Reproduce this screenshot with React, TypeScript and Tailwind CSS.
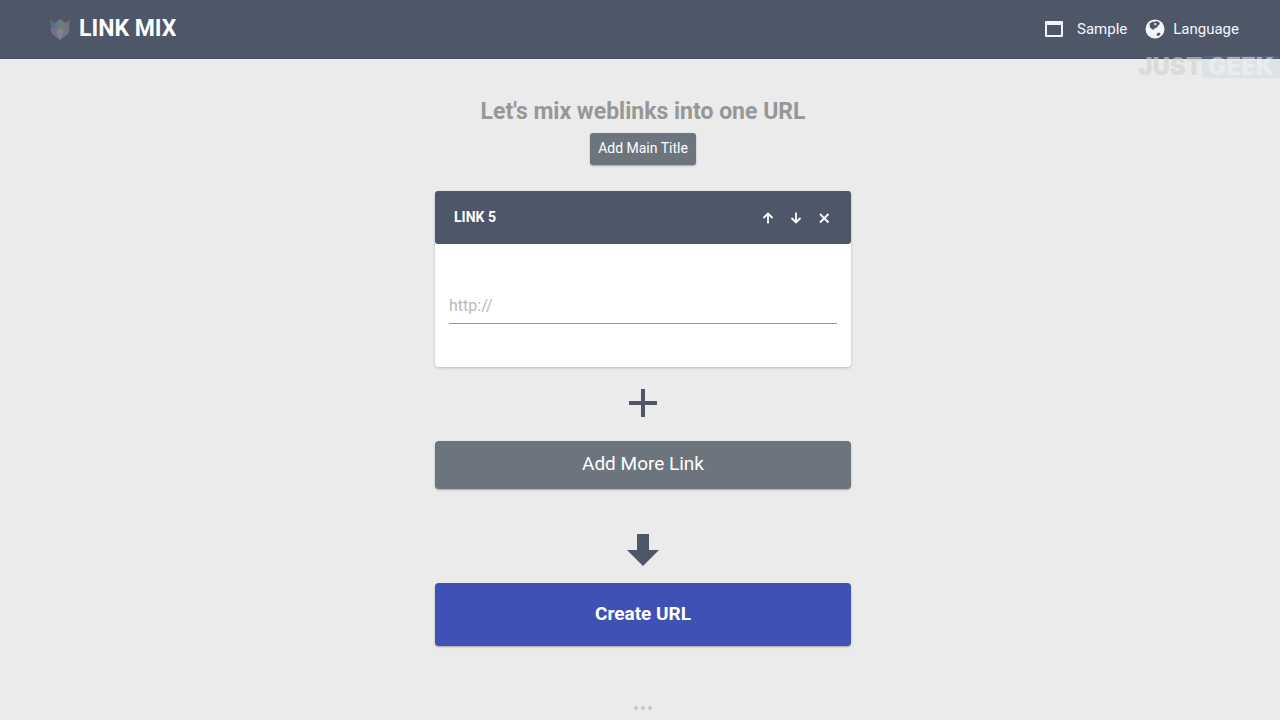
import { useState } from "react";

const CARD_ACTIONS = [
  { label: "Move link up", path: "M7 12.500V2.500M2.500 7L7 2.500 11.500 7" },
  { label: "Move link down", path: "M7 1.500v10M2.500 7L7 11.500 11.500 7" },
  { label: "Remove link", path: "M3 3l8.500 8.500M11.500 3L3 11.500" },
];

function Logo() {
  return (
    <svg viewBox="0 0 22 22" className="size-[22px] opacity-60" aria-hidden="true">
      <path d="M1 2l5 3v12l-3-3z" fill="#6d7c90" />
      <path d="M21 2l-5 3v12l3-3z" fill="#9a7f80" />
      <path d="M6 5l5-4v10l-5 2z" fill="#6f9396" />
      <path d="M16 5l-5-4v10l5 2z" fill="#7f9a86" />
      <path d="M1 9l10 4v9l-8-6z" fill="#8580b4" />
      <path d="M21 9l-10 4v9l8-6z" fill="#9585a4" />
      <path d="M11 9l4 5-4 8-4-8z" fill="#a7a0a4" />
    </svg>
  );
}

function WindowIcon() {
  return (
    <svg viewBox="0 0 18 16" className="h-4 w-[18px]" aria-hidden="true">
      <path
        fill="#f4f6fa"
        fillRule="evenodd"
        d="M1 0h16a1 1 0 0 1 1 1v14a1 1 0 0 1-1 1H1a1 1 0 0 1-1-1V1a1 1 0 0 1 1-1zM2 4v10h14V4z"
      />
    </svg>
  );
}

function GlobeIcon() {
  return (
    <svg viewBox="0 0 20 20" className="size-5" aria-hidden="true">
      <circle cx="10" cy="10" r="9.500" fill="#f4f6fa" />
      <path
        fill="#4e5768"
        d="M4.500 4.500L8 2.500l1.500.5 1.500-1 3 1 1 2-2 1.500-1 2-2 .5-1.500 2L7 10 5 8.500z"
      />
      <path fill="#f4f6fa" d="M9 4.500l2-.5.500 1.500-1.500 1z" />
      <path fill="#4e5768" d="M12 14.500l2-1 1.500 1-.5 1.500-2 1-1.500-.5z" />
    </svg>
  );
}

function Header() {
  return (
    <header className="flex h-[59px] items-center justify-between border-b border-[#434b5c] bg-[#4e5768] pr-[41px] pl-[49px] text-white">
      <a href="#home" className="flex items-center gap-2 text-[23px] leading-7 font-bold">
        <Logo />
        LINK MIX
      </a>
      <nav className="flex items-center gap-[18px] text-[15px] leading-5 text-[#f4f6fa]">
        <a href="#sample" className="flex items-center gap-3.5">
          <WindowIcon />
          Sample
        </a>
        <a href="#language" className="flex items-center gap-2">
          <GlobeIcon />
          Language
        </a>
      </nav>
    </header>
  );
}

function LinkCard({ number }: { number: number }) {
  const [url, setUrl] = useState("");

  return (
    <section className="rounded-sm bg-white shadow-[0_1px_3px_rgba(0,0,0,0.2)]">
      <div className="flex h-[53px] items-center justify-between rounded-[3px] bg-[#4e5768] pr-5 pl-[19px] text-white">
        <h2 className="pb-0.5 text-sm leading-5 font-bold">LINK {number}</h2>
        <div className="flex gap-3.5">
          {CARD_ACTIONS.map(({ label, path }) => (
            <button key={label} type="button" aria-label={label}>
              <svg viewBox="0 0 14 14" className="size-3.5" aria-hidden="true">
                <path d={path} fill="none" stroke="currentColor" strokeWidth="1.8" />
              </svg>
            </button>
          ))}
        </div>
      </div>
      <div className="px-3.5 py-[43px]">
        <input
          type="url"
          aria-label={`Link ${number} address`}
          placeholder="http://"
          value={url}
          onChange={(e) => setUrl(e.target.value)}
          className="block h-[37px] w-full border-b border-[#949494] text-base text-gray-700 outline-none placeholder:text-[#b9b9b9]"
        />
      </div>
    </section>
  );
}

export default function App() {
  return (
    <div className="relative min-h-screen bg-[#ebebeb] font-[Roboto,sans-serif]">
      <Header />

      <div
        className="absolute top-14 right-0 flex items-center font-[Inter,sans-serif] text-2xl leading-[22px] font-black opacity-60"
        aria-hidden="true"
      >
        <span className="text-[#d2d2d2]">JUST</span>
        <span className="rounded-xs bg-linear-to-b from-[#5c6f80] from-15% to-[#cfe0e4] to-15% px-1.5 text-[#ececec]">GEEK</span>
      </div>

      <main className="flex flex-col items-center pt-9 pl-1.5">
        <h1 className="pt-px text-[23px] leading-8 font-bold text-[#979797]">Let's mix weblinks into one URL</h1>
        <button
          type="button"
          className="mt-[5px] h-8 rounded-[3px] bg-[#6c757d] px-2 pb-0.5 text-sm text-white shadow-[0_1px_2px_rgba(0,0,0,0.3)]"
        >
          Add Main Title
        </button>

        <div className="mt-[26px] flex w-full max-w-[416px] flex-col">
          <LinkCard number={5} />

          <svg viewBox="0 0 28 28" className="mt-[22px] size-7 self-center" aria-hidden="true">
            <path d="M14 0v28M0 14h28" stroke="#4e5768" strokeWidth="4" />
          </svg>

          <button
            type="button"
            className="mt-6 h-12 rounded-sm bg-[#6c757d] pb-0.5 text-[19px] text-white shadow-[0_1px_2px_rgba(0,0,0,0.3)]"
          >
            Add More Link
          </button>

          <svg viewBox="0 0 32 32" className="mt-[45px] size-8 self-center" aria-hidden="true">
            <path d="M10 0h12v16h10L16 32 0 16h10z" fill="#4e5768" />
          </svg>

          <button
            type="button"
            className="mt-[17px] h-[63px] rounded-sm bg-[#3f51b5] text-[19px] font-bold text-white shadow-[0_1px_2px_rgba(0,0,0,0.3)]"
          >
            Create URL
          </button>
        </div>

        <div className="mt-15 flex gap-[3px]" aria-hidden="true">
          <span className="size-1 rounded-full bg-[#c6c6c6]" />
          <span className="size-1 rounded-full bg-[#c6c6c6]" />
          <span className="size-1 rounded-full bg-[#c6c6c6]" />
        </div>
      </main>
    </div>
  );
}
